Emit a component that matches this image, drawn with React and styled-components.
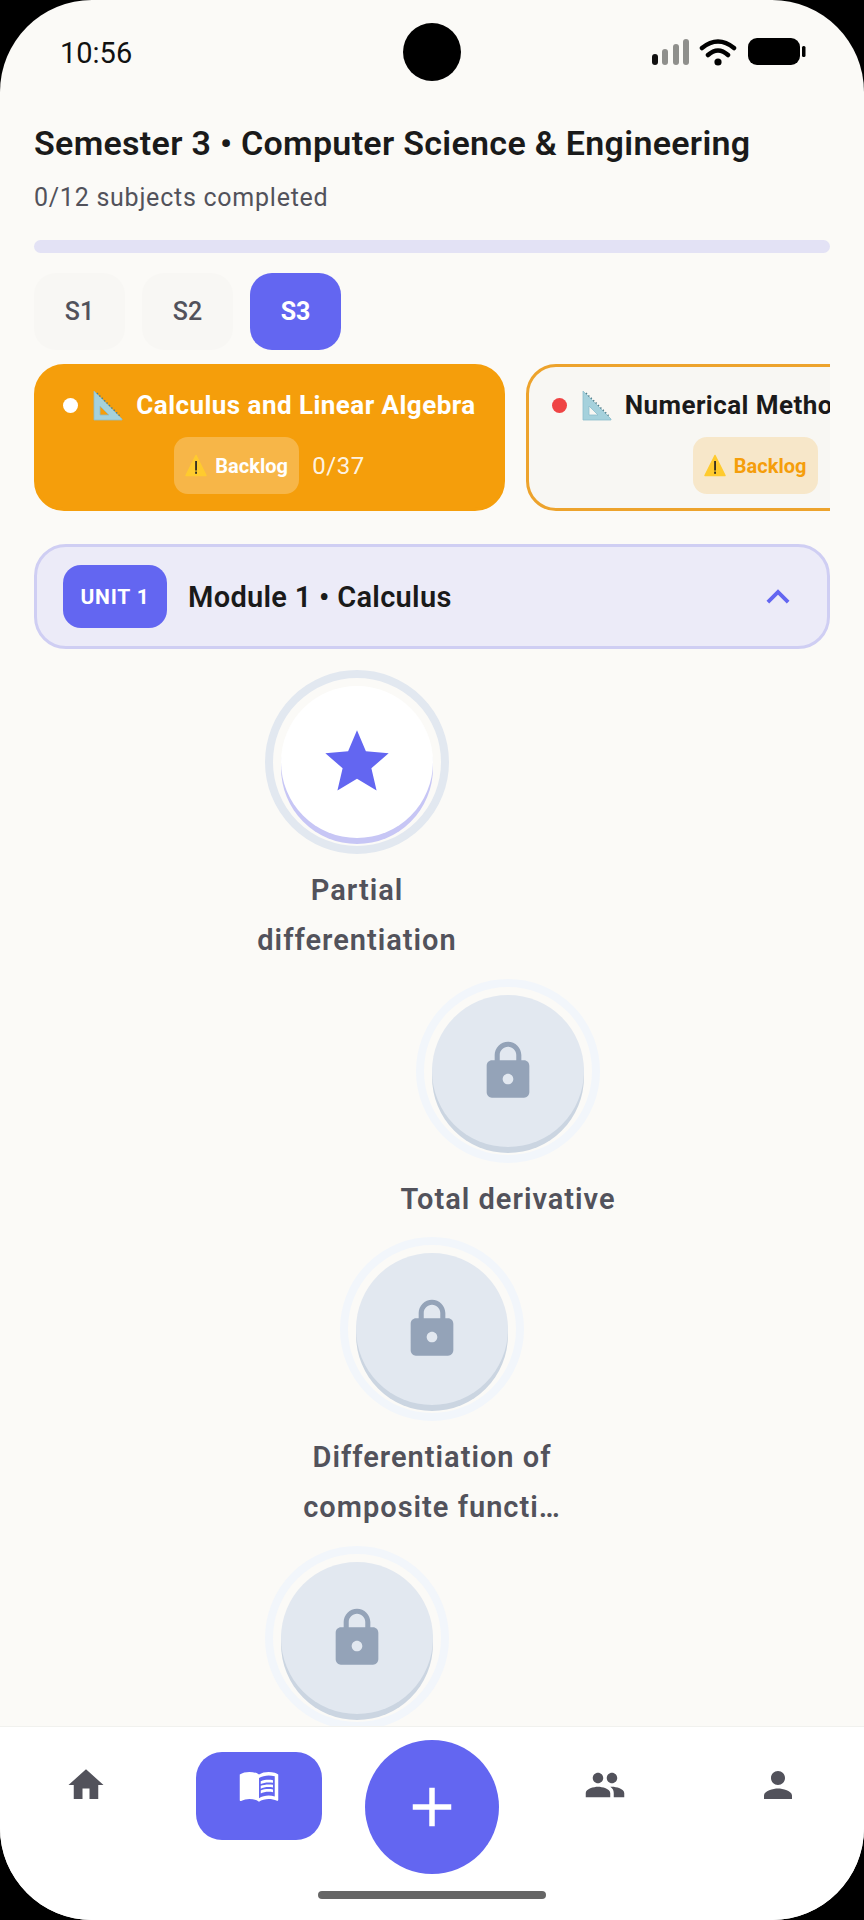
import React from "react";
import styled, { createGlobalStyle } from "styled-components";
import { MdAdd, MdExpandLess, MdGroup, MdHome, MdLock, MdMenuBook, MdPerson, MdStar } from "react-icons/md";

const Global = createGlobalStyle`
  html, body {
    margin: 0;
    padding: 0;
    background: #000;
    font-family: Roboto, "Liberation Sans", sans-serif;
  }
`;

const Screen = styled.div`
  position: relative;
  width: 864px;
  height: 1920px;
  border-radius: 92px;
  overflow: hidden;
  background: #fbfaf7;
  display: flex;
  flex-direction: column;
`;

const StatusBar = styled.div`
  height: 104px;
  flex-shrink: 0;
  box-sizing: border-box;
  padding: 2px 58px 0 60px;
  display: flex;
  align-items: center;
  justify-content: space-between;
  color: #111;
  font-size: 29px;
`;

const Camera = styled.div`
  position: absolute;
  left: 403px;
  top: 23px;
  width: 58px;
  height: 58px;
  border-radius: 50%;
  background: #000;
`;

const Main = styled.main`
  flex: 1;
  min-height: 0;
  overflow: hidden;
  padding: 0 34px;
`;

const Title = styled.h1`
  margin: 16px 0 0;
  font-size: 34px;
  line-height: 46px;
  font-weight: 600;
  letter-spacing: 0.3px;
  color: #1a1a1a;
`;

const Subtitle = styled.p`
  margin: 15px 0 0;
  font-size: 25px;
  line-height: 34px;
  letter-spacing: 0.75px;
  color: #52525b;
`;

const Progress = styled.div`
  height: 13px;
  margin-top: 25px;
  border-radius: 7px;
  background: #e3e2f5;
`;

const Semesters = styled.div`
  display: flex;
  gap: 17px;
  margin-top: 20px;
`;

const SemesterPill = styled.div`
  width: 91px;
  height: 77px;
  border-radius: 22px;
  display: flex;
  align-items: center;
  justify-content: center;
  font-size: 25px;
  font-weight: ${p => (p.$active ? 700 : 500)};
  color: ${p => (p.$active ? "#fff" : "#52525b")};
  background: ${p => (p.$active ? "#6366f1" : "#f8f7f4")};
`;

const Subjects = styled.div`
  display: flex;
  gap: 21px;
  margin-top: 14px;
  overflow: hidden;
`;

const SubjectCard = styled.div`
  flex: 0 0 ${p => p.$width}px;
  height: 147px;
  box-sizing: border-box;
  border-radius: 30px;
  border: 3px solid ${p => (p.$active ? "#f59e0b" : "#eda32c")};
  background: ${p => (p.$active ? "#f59e0b" : "#f8f7f3")};
  display: flex;
  flex-direction: column;
  align-items: center;
  padding-top: 19px;
`;

const SubjectTop = styled.div`
  display: flex;
  align-items: center;
  white-space: nowrap;
`;

const Dot = styled.span`
  width: 15px;
  height: 15px;
  border-radius: 50%;
  margin-right: 14px;
  background: ${p => (p.$active ? "#fff" : "#ef4444")};
`;

const SubjectName = styled.span`
  margin-left: 13px;
  font-size: 26px;
  line-height: 38px;
  font-weight: 700;
  letter-spacing: 0.45px;
  color: ${p => (p.$active ? "#fff" : "#1a1a1a")};
`;

const SubjectBottom = styled.div`
  display: flex;
  align-items: center;
  gap: 13px;
  margin-top: 13px;
`;

const Backlog = styled.div`
  width: 125px;
  height: 57px;
  box-sizing: border-box;
  border-radius: 14px;
  padding-left: 11px;
  display: flex;
  align-items: center;
  gap: 8px;
  font-size: 20px;
  font-weight: 700;
  color: ${p => (p.$active ? "#fff" : "#f59e0b")};
  background: ${p => (p.$active ? "rgba(255,255,255,0.25)" : "rgba(245,158,11,0.18)")};
`;

const Count = styled.span`
  font-size: 24px;
  letter-spacing: 0.5px;
  color: rgba(255, 255, 255, 0.9);
`;

const UnitHeader = styled.div`
  height: 105px;
  box-sizing: border-box;
  margin-top: 33px;
  padding: 0 26px;
  border: 3px solid #cfcef3;
  border-radius: 32px;
  background: #ecebf8;
  display: flex;
  align-items: center;
`;

const UnitBadge = styled.div`
  width: 104px;
  height: 63px;
  border-radius: 18px;
  background: #6366f1;
  color: #fff;
  font-size: 21px;
  font-weight: 700;
  letter-spacing: 0.8px;
  display: flex;
  align-items: center;
  justify-content: center;
`;

const UnitName = styled.span`
  flex: 1;
  margin-left: 21px;
  font-size: 29px;
  font-weight: 600;
  letter-spacing: 0.3px;
  color: #1a1a1a;
`;

const Path = styled.div`
  display: flex;
  flex-direction: column;
  margin-top: 21px;
`;

const NodeRow = styled.div`
  display: flex;
  flex-direction: column;
  align-items: center;
  padding-left: ${p => Math.max(p.$shift, 0) * 2}px;
  padding-right: ${p => Math.max(-p.$shift, 0) * 2}px;
  margin-bottom: 13.5px;
`;

const Ring = styled.div`
  width: 184px;
  height: 184px;
  flex-shrink: 0;
  box-sizing: border-box;
  border-radius: 50%;
  border: 8px solid ${p => (p.$locked ? "#f2f6fb" : "#e2e8f0")};
  display: flex;
  align-items: center;
  justify-content: center;
`;

const NodeButton = styled.div`
  width: 152px;
  height: 152px;
  border-radius: 50%;
  display: flex;
  align-items: center;
  justify-content: center;
  background: ${p => (p.$locked ? "#e2e8f0" : "#fff")};
  color: ${p => (p.$locked ? "#94a3b8" : "#6366f1")};
  box-shadow: 0 6px 0 ${p => (p.$locked ? "#cbd5e1" : "#c7c6f5")};
`;

const NodeLabel = styled.div`
  width: 272px;
  margin-top: 11px;
  text-align: center;
  font-size: 29px;
  line-height: 50px;
  font-weight: 600;
  letter-spacing: 1px;
  color: #52525b;
`;

const BottomNav = styled.nav`
  height: 194px;
  flex-shrink: 0;
  box-sizing: border-box;
  padding-top: 13px;
  background: #fff;
  border-top: 1px solid #f1f1ee;
  display: grid;
  grid-template-columns: repeat(5, 1fr);
  justify-items: center;
  align-items: start;
`;

const NavItem = styled.div`
  width: 126px;
  height: 88px;
  margin-top: 12px;
  box-sizing: border-box;
  padding-top: 12px;
  border-radius: 26px;
  display: flex;
  justify-content: center;
  align-items: flex-start;
  color: ${p => (p.$active ? "#fff" : "#52525b")};
  background: ${p => (p.$active ? "#6366f1" : "transparent")};
`;

const Fab = styled.div`
  width: 134px;
  height: 134px;
  border-radius: 50%;
  background: #6366f1;
  color: #fff;
  display: flex;
  align-items: center;
  justify-content: center;
`;

const HomeBar = styled.div`
  position: absolute;
  left: 318px;
  bottom: 21px;
  width: 228px;
  height: 8px;
  border-radius: 4px;
  background: #666;
`;

const StatusIcons = () => (
  <svg width="154" height="30" viewBox="0 0 154 30">
    <rect x="0" y="16" width="6" height="11" rx="3" fill="#111" />
    <rect x="10" y="11" width="6" height="16" rx="3" fill="#8f8f8c" />
    <rect x="21" y="6" width="6" height="21" rx="3" fill="#8f8f8c" />
    <rect x="31" y="1" width="6" height="26" rx="3" fill="#8f8f8c" />
    <path d="M50 10 Q66 -3 82 10 M56 17 Q66 8 76 17" fill="none" stroke="#000" strokeWidth="4.5" strokeLinecap="round" />
    <circle cx="66" cy="24" r="3.6" fill="#000" />
    <rect x="96" y="0" width="52" height="27" rx="9" fill="#000" />
    <rect x="150" y="8" width="3.5" height="11" rx="1.5" fill="#000" />
  </svg>
);

const RulerIcon = () => (
  <svg width="31" height="31" viewBox="0 0 31 31">
    <path
      d="M2 1 L30 29 L30 30 L2 30 Z M8 16 L8 25 L17 25 Z"
      fill="#a5d1dc"
      fillRule="evenodd"
      stroke="#8dbecb"
      strokeWidth="0.8"
      strokeLinejoin="round"
    />
    <path d="M5 3 L29 27" stroke="#4f7f8c" strokeWidth="1.4" strokeDasharray="1.4 2" />
  </svg>
);

const WarningIcon = () => (
  <svg width="22" height="23" viewBox="0 0 22 23" style={{ flexShrink: 0 }}>
    <path d="M11 1.5 L21 21.5 L1 21.5 Z" fill="#ffcb2e" stroke="#ffcb2e" strokeWidth="1.5" strokeLinejoin="round" />
    <rect x="10.2" y="7" width="1.7" height="9.5" fill="#222" />
    <rect x="10.2" y="17.6" width="1.7" height="2.2" fill="#222" />
  </svg>
);

const subjects = [
  { name: "Calculus and Linear Algebra", count: "0/37", width: 471, active: true },
  { name: "Numerical Methods & Probability", count: "0/24", width: 524, active: false },
];

const nodes = [
  { id: 1, label: "Partial differentiation", shift: -75, locked: false },
  { id: 2, label: "Total derivative", shift: 76, locked: true },
  { id: 3, label: "Differentiation of composite functi…", shift: 0, locked: true },
  { id: 4, shift: -75, locked: true },
];

export default function App() {
  return (
    <>
      <Global />
      <Screen>
        <StatusBar>
          <span>10:56</span>
          <StatusIcons />
        </StatusBar>
        <Camera />
        <Main>
          <Title>Semester 3 • Computer Science &amp; Engineering</Title>
          <Subtitle>0/12 subjects completed</Subtitle>
          <Progress />
          <Semesters>
            <SemesterPill>S1</SemesterPill>
            <SemesterPill>S2</SemesterPill>
            <SemesterPill $active>S3</SemesterPill>
          </Semesters>
          <Subjects>
            {subjects.map(s => (
              <SubjectCard key={s.name} $active={s.active} $width={s.width}>
                <SubjectTop>
                  <Dot $active={s.active} />
                  <RulerIcon />
                  <SubjectName $active={s.active}>{s.name}</SubjectName>
                </SubjectTop>
                <SubjectBottom>
                  <Backlog $active={s.active}>
                    <WarningIcon />
                    Backlog
                  </Backlog>
                  <Count>{s.count}</Count>
                </SubjectBottom>
              </SubjectCard>
            ))}
          </Subjects>
          <UnitHeader>
            <UnitBadge>UNIT 1</UnitBadge>
            <UnitName>Module 1 • Calculus</UnitName>
            <MdExpandLess size={46} color="#6366f1" />
          </UnitHeader>
          <Path>
            {nodes.map(n => (
              <NodeRow key={n.id} $shift={n.shift}>
                <Ring $locked={n.locked}>
                  <NodeButton $locked={n.locked}>
                    {n.locked ? <MdLock size={64} /> : <MdStar size={76} />}
                  </NodeButton>
                </Ring>
                {n.label && <NodeLabel>{n.label}</NodeLabel>}
              </NodeRow>
            ))}
          </Path>
        </Main>
        <BottomNav>
          <NavItem><MdHome size={42} /></NavItem>
          <NavItem $active><MdMenuBook size={42} /></NavItem>
          <Fab><MdAdd size={66} /></Fab>
          <NavItem><MdGroup size={42} /></NavItem>
          <NavItem><MdPerson size={42} /></NavItem>
        </BottomNav>
        <HomeBar />
      </Screen>
    </>
  );
}
